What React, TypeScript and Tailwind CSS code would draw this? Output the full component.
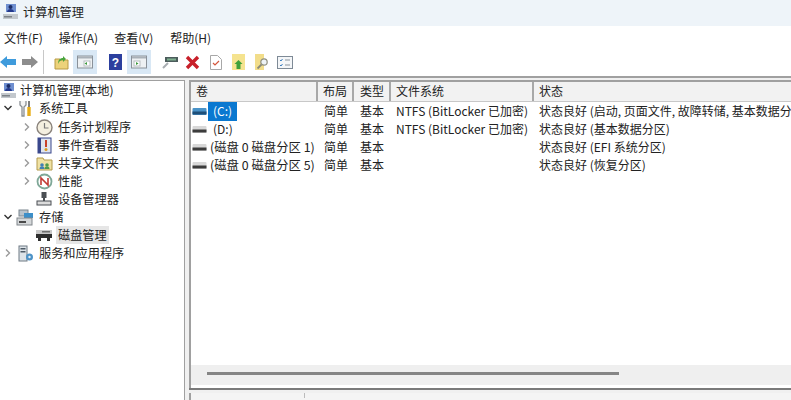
import type { ReactNode } from "react";

const font = { fontFamily: '"Noto Sans CJK SC", "Noto Sans", sans-serif' };

function Chevron({ open }: { open?: boolean }) {
  return (
    <svg width="10" height="10" viewBox="0 0 10 10" fill="none" stroke={open ? "#333" : "#9a9a9a"} strokeWidth="1.4">
      {open ? <path d="M1.5 3l3.5 3.5L8.5 3" /> : <path d="M3 1.5L6.5 5 3 8.5" />}
    </svg>
  );
}

function Disk({ blue }: { blue?: boolean }) {
  return (
    <svg width="15" height="9" viewBox="0 0 15 9">
      <rect x="0.5" y="1" width="14" height="7" rx="1" fill={blue ? "#4a93c8" : "#d8d8d8"} />
      <rect x="0.5" y="4.500" width="14" height="3" fill={blue ? "#1f4f78" : "#3c3c3c"} />
    </svg>
  );
}

const icons: Record<string, ReactNode> = {
  computer: (
    <svg width="17" height="17" viewBox="0 0 17 17">
      <rect x="4" y="1" width="10" height="8" fill="#6f8fd0" />
      <circle cx="8.500" cy="4" r="2" fill="#1c2c66" />
      <path d="M5 9c0-2 2-3 3.500-3S12 7 12 9z" fill="#24398c" />
      <rect x="1" y="11" width="15" height="5" fill="#c3c8cd" />
      <rect x="2" y="13" width="8" height="1.500" fill="#7d8288" />
    </svg>
  ),
  tools: (
    <svg width="17" height="17" viewBox="0 0 17 17" fill="none">
      <path d="M3 1v4l2 2v9h2V7l2-2V1" stroke="#8a8f94" strokeWidth="1.300" fill="#f4f4f4" />
      <path d="M12 1v6" stroke="#5e5e5e" strokeWidth="1.600" />
      <path d="M12 7v9" stroke="#e8ae18" strokeWidth="3.400" />
    </svg>
  ),
  clock: (
    <svg width="17" height="17" viewBox="0 0 17 17" fill="none">
      <circle cx="8.500" cy="8.500" r="7.500" fill="#f4efe0" stroke="#8a837c" strokeWidth="1.400" />
      <path d="M8.500 4v5h4" stroke="#7a7a7a" strokeWidth="1.200" />
    </svg>
  ),
  event: (
    <svg width="15" height="17" viewBox="0 0 15 17">
      <rect x="1" y="1" width="13" height="15" fill="#dfe4ee" stroke="#39478c" />
      <rect x="1" y="1" width="3" height="15" fill="#39478c" />
      <rect x="8" y="3" width="2" height="7" fill="#c8412a" />
      <circle cx="9" cy="12.500" r="1.500" fill="#d89a20" />
    </svg>
  ),
  share: (
    <svg width="17" height="16" viewBox="0 0 17 16">
      <path d="M1 3h6l1 2h8v10H1z" fill="#f0e2a4" stroke="#b39a4c" />
      <circle cx="6" cy="10" r="1.800" fill="#3f7fb5" />
      <path d="M3.500 14c0-2 1-2.500 2.500-2.500S8.500 12 8.500 14z" fill="#3f7fb5" />
      <circle cx="11" cy="10" r="1.800" fill="#4f9a4b" />
      <path d="M8.500 14c0-2 1-2.500 2.500-2.500s2.500.500 2.500 2.500z" fill="#4f9a4b" />
    </svg>
  ),
  perf: (
    <svg width="17" height="17" viewBox="0 0 17 17" fill="none">
      <circle cx="8.500" cy="8.500" r="7" fill="#fff" stroke="#7fa898" strokeWidth="1.800" />
      <path d="M5 12V5l7 7V5" stroke="#c23a34" strokeWidth="1.600" />
    </svg>
  ),
  device: (
    <svg width="16" height="16" viewBox="0 0 16 16">
      <rect x="5.500" y="1" width="5" height="6" fill="#4b4f54" />
      <rect x="7" y="7" width="2" height="3" fill="#4b4f54" />
      <rect x="1" y="10" width="14" height="4" fill="#dcdcdc" stroke="#4b4f54" />
    </svg>
  ),
  storage: (
    <svg width="18" height="17" viewBox="0 0 18 17">
      <rect x="3" y="1" width="9" height="6" fill="#b9c3cc" stroke="#7b858e" />
      <rect x="8" y="4" width="9" height="5" fill="#3d8fc9" />
      <rect x="1" y="9" width="15" height="7" fill="#d5d8da" stroke="#80868b" />
      <rect x="3" y="12" width="7" height="2" fill="#4a4a4a" />
    </svg>
  ),
  disk: (
    <svg width="16" height="12" viewBox="0 0 16 12">
      <rect x="0" y="1" width="16" height="4" fill="#c9c9c9" />
      <rect x="0" y="5" width="16" height="4" fill="#2f2f2f" />
      <rect x="6" y="2" width="8" height="1.500" fill="#6f6f6f" />
      <rect x="2" y="9" width="3" height="3" fill="#2f2f2f" />
      <rect x="11" y="9" width="3" height="3" fill="#2f2f2f" />
    </svg>
  ),
  services: (
    <svg width="17" height="17" viewBox="0 0 17 17">
      <rect x="2" y="1" width="8" height="15" fill="#dde3e8" stroke="#6f7a84" />
      <rect x="3.500" y="3" width="5" height="1.500" fill="#4d5a66" />
      <rect x="3.500" y="6" width="5" height="1.500" fill="#4d5a66" />
      <circle cx="12.500" cy="12" r="3.500" fill="#4e93c7" />
      <circle cx="12.500" cy="12" r="1.200" fill="#e5eef5" />
    </svg>
  ),
};

type Node = { label: string; icon: string; indent: number; arrow?: "open" | "closed"; selected?: boolean };

const tree: Node[] = [
  { label: "系统工具", icon: "tools", indent: 1, arrow: "open" },
  { label: "任务计划程序", icon: "clock", indent: 2, arrow: "closed" },
  { label: "事件查看器", icon: "event", indent: 2, arrow: "closed" },
  { label: "共享文件夹", icon: "share", indent: 2, arrow: "closed" },
  { label: "性能", icon: "perf", indent: 2, arrow: "closed" },
  { label: "设备管理器", icon: "device", indent: 2 },
  { label: "存储", icon: "storage", indent: 1, arrow: "open" },
  { label: "磁盘管理", icon: "disk", indent: 2, selected: true },
  { label: "服务和应用程序", icon: "services", indent: 1, arrow: "closed" },
];

const volumes = [
  { name: "(C:)", layout: "简单", type: "基本", fs: "NTFS (BitLocker 已加密)", status: "状态良好 (启动, 页面文件, 故障转储, 基本数据分区)", blue: true, drive: true },
  { name: "(D:)", layout: "简单", type: "基本", fs: "NTFS (BitLocker 已加密)", status: "状态良好 (基本数据分区)", drive: true },
  { name: "(磁盘 0 磁盘分区 1)", layout: "简单", type: "基本", fs: "", status: "状态良好 (EFI 系统分区)" },
  { name: "(磁盘 0 磁盘分区 5)", layout: "简单", type: "基本", fs: "", status: "状态良好 (恢复分区)" },
];

function ToolButton({ active, narrow, children }: { active?: boolean; narrow?: boolean; children: ReactNode }) {
  return (
    <div className={`flex h-[24px] items-center justify-center ${narrow ? "w-[23px]" : "w-[24px]"} ${active ? "bg-[#d9e8f5]" : ""}`}>
      {children}
    </div>
  );
}

function Toolbar() {
  return (
    <div className="flex h-[28px] items-start border-b-2 border-[#a0a0a0] bg-white">
      <div className="flex h-[24px] w-[43px] items-center gap-[6px]">
        <svg width="16" height="14" viewBox="0 0 16 14"><path d="M0 7l7-6v3h9v6H7v3z" fill="#3f9bdc" /></svg>
        <svg width="16" height="14" viewBox="0 0 16 14"><path d="M16 7L9 1v3H0v6h9v3z" fill="#8d8d8d" /></svg>
      </div>
      <div className="h-[24px] w-px bg-[#c8c8c8]" />
      <div className="ml-[5px] flex items-center">
        <ToolButton>
          <svg width="15" height="15" viewBox="0 0 15 15">
            <path d="M1 4h5l1 1h7v9H1z" fill="#edd27a" stroke="#b99a45" />
            <path d="M4 9c0-4 2-6 5-6V1l3 3-3 3V5C7 5 5 6 4 9z" fill="#4aa53c" />
          </svg>
        </ToolButton>
        <ToolButton active>
          <svg width="16" height="14" viewBox="0 0 16 14">
            <rect x="0.500" y="1" width="15" height="12" fill="#eef1f3" stroke="#8a9199" />
            <rect x="1" y="1.500" width="14" height="2" fill="#a9b1b8" />
            <rect x="7" y="6" width="6" height="5" fill="#fff" stroke="#b7bdc2" />
            <path d="M10 7v3L7.500 8.500z" fill="#3c9a3c" />
          </svg>
        </ToolButton>
        <div className="w-[6px]" />
        <ToolButton>
          <svg width="13" height="16" viewBox="0 0 13 16">
            <rect width="13" height="16" fill="#2c3f9e" />
            <text x="6.500" y="12.500" textAnchor="middle" fontSize="12" fontWeight="700" fill="#fff" fontFamily="Liberation Sans">?</text>
          </svg>
        </ToolButton>
        <ToolButton active>
          <svg width="16" height="14" viewBox="0 0 16 14">
            <rect x="0.500" y="1" width="15" height="12" fill="#eef1f3" stroke="#8a9199" />
            <rect x="1" y="1.500" width="14" height="2" fill="#a9b1b8" />
            <rect x="3" y="6" width="6" height="5" fill="#fff" stroke="#b7bdc2" />
            <path d="M5 7v3l2.500-1.500z" fill="#3c9a3c" />
          </svg>
        </ToolButton>
        <div className="w-[7px]" />
        <ToolButton narrow>
          <svg width="16" height="14" viewBox="0 0 16 14">
            <rect x="3" y="2" width="13" height="5" fill="#4c5c5c" />
            <rect x="5" y="3.500" width="9" height="2" fill="#7fb08f" />
            <path d="M6 8l-5 5" stroke="#a8adb2" strokeWidth="2" />
          </svg>
        </ToolButton>
        <ToolButton narrow>
          <svg width="15" height="15" viewBox="0 0 15 15">
            <path d="M2 2l11 11M13 2L2 13" stroke="#c8202a" strokeWidth="3.400" />
          </svg>
        </ToolButton>
        <ToolButton narrow>
          <svg width="12" height="15" viewBox="0 0 12 15" fill="none">
            <path d="M.5.500h7l4 4v10H.5z" fill="#fff" stroke="#a8a8a8" />
            <path d="M3 8l2 2 4-4" stroke="#d4573c" strokeWidth="1.200" />
          </svg>
        </ToolButton>
        <ToolButton narrow>
          <svg width="13" height="16" viewBox="0 0 13 16">
            <rect width="13" height="16" fill="#f5e38f" />
            <path d="M6.500 6l4 4H8.500v5h-4v-5H2.500z" fill="#3fa03a" />
          </svg>
        </ToolButton>
        <ToolButton narrow>
          <svg width="14" height="16" viewBox="0 0 14 16" fill="none">
            <rect width="9" height="16" fill="#f2dd8a" />
            <circle cx="9" cy="8" r="3.200" fill="#eef3f6" stroke="#8f8f7f" strokeWidth="1.200" />
            <path d="M6.500 10.500L2.500 14.500" stroke="#8a8a7a" strokeWidth="1.800" />
          </svg>
        </ToolButton>
        <ToolButton narrow>
          <svg width="16" height="13" viewBox="0 0 16 13" fill="none">
            <rect x="0.500" y="0.500" width="15" height="12" fill="#f4f6f8" stroke="#7e8a96" />
            <path d="M3 4l1 1 1.500-2M3 9l1 1 1.500-2" stroke="#3c7fc0" />
            <path d="M8 4h5M8 9h5" stroke="#8a949e" />
          </svg>
        </ToolButton>
      </div>
    </div>
  );
}

export default function App() {
  return (
    <div className="flex h-[400px] w-[791px] flex-col overflow-hidden bg-[#f0f0f0] text-[12px] leading-[18px] text-[#222]" style={font}>
      <div className="flex h-[26px] items-center gap-[4px] bg-[#eef4f9] pb-[3px] pl-[2px]">
        {icons.computer}
        <span className="text-[12.200px]">计算机管理</span>
      </div>
      <div className="flex h-[24px] items-center gap-[16px] bg-white pl-[4px]">
        <span>文件(F)</span>
        <span>操作(A)</span>
        <span>查看(V)</span>
        <span className="ml-[1px]">帮助(H)</span>
      </div>
      <Toolbar />
      <div className="flex min-h-0 flex-1 gap-[4px] pt-[2px]">
        <div className="w-[185px] border-r border-t border-[#a0a0a0] bg-white text-[12.200px]">
          <div className="flex h-[18px] items-center gap-[3px]">
            {icons.computer}
            <span>计算机管理(本地)</span>
          </div>
          {tree.map((n, i) => (
            <div
              key={n.label}
              className={`flex h-[18px] items-center ${n.indent === 1 ? "pl-[3px]" : "pl-[22px]"} ${i === 0 ? "mb-px" : ""}`}
            >
              <span className="flex w-[12px] shrink-0 items-center">
                {n.arrow && <Chevron open={n.arrow === "open"} />}
              </span>
              <span className="flex w-[20px] shrink-0 items-center justify-center">{icons[n.icon]}</span>
              <span className={`ml-[2px] px-[2px] ${n.selected ? "bg-[#e6e6e6]" : ""}`}>{n.label}</span>
            </div>
          ))}
        </div>
        <div className="flex min-w-0 flex-1 flex-col">
          <div className="flex h-[308px] flex-col border-l-2 border-t-2 border-[#a0a0a0] bg-white pb-[3px]">
            <div className="flex h-[20px] shrink-0 border-b border-[#c8c8c8] bg-[#f2f2f2] leading-[17px]">
              <div className="w-[127px] border-r-2 border-[#a8a8a8] pl-[5px]">卷</div>
              <div className="w-[36px] border-r-2 border-[#a8a8a8] pl-[5px]">布局</div>
              <div className="w-[37px] border-r-2 border-[#a8a8a8] pl-[6px]">类型</div>
              <div className="w-[143px] border-r-2 border-[#a8a8a8] pl-[5px]">文件系统</div>
              <div className="flex-1 pl-[5px]">状态</div>
            </div>
            {volumes.map((v) => (
              <div key={v.name} className="flex h-[18px] shrink-0 items-center whitespace-nowrap">
                <div className="flex w-[127px] items-center pl-px">
                  <Disk blue={v.blue} />
                  {v.drive ? (
                    <span className={`ml-px flex h-[19px] items-center px-[5px] ${v.blue ? "bg-[#0a78d0] text-white" : ""}`}>
                      {v.name}
                    </span>
                  ) : (
                    <span className="ml-[3px] text-[12.400px]">{v.name}</span>
                  )}
                </div>
                <div className="w-[36px] pl-[6px]">{v.layout}</div>
                <div className="w-[37px] pl-[6px]">{v.type}</div>
                <div className="w-[143px] pl-[5px]">{v.fs}</div>
                <div className="min-w-0 flex-1 overflow-hidden pl-[5px]">{v.status}</div>
              </div>
            ))}
            <div className="flex-1" />
            <div className="flex h-[20px] shrink-0 items-center bg-[#efefef] pb-[4px] pl-[16px]">
              <div className="h-[3px] w-[412px] bg-[#858585]" />
            </div>
          </div>
          <div className="h-[2px] bg-[#7a7a7a]" />
          <div className="mt-[3px] flex-1 border-l-2 border-[#a0a0a0] bg-[#f4f4f4]">
            <div className="h-[5px] w-[114px] border-r border-[#bbb]" />
          </div>
        </div>
      </div>
    </div>
  );
}
